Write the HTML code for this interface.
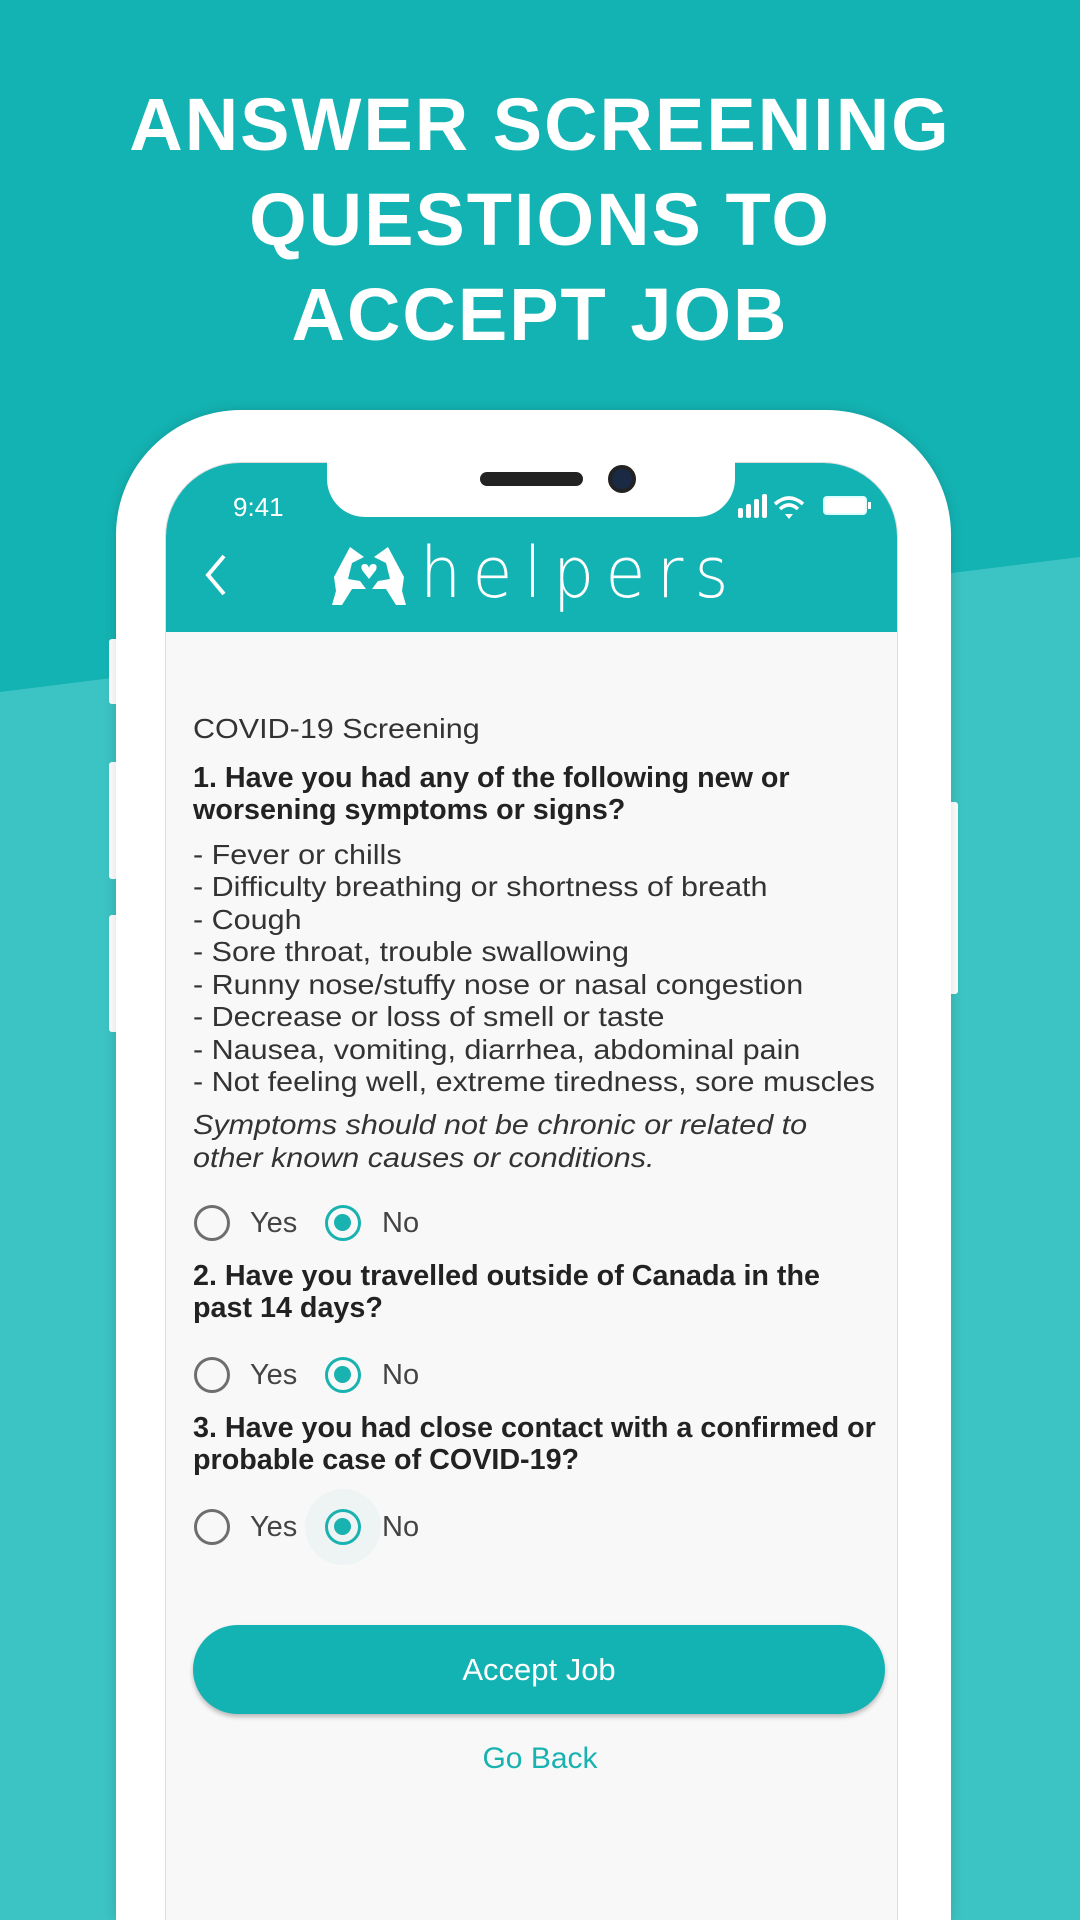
<!DOCTYPE html>
<html style="width:1080px;height:1920px;overflow:hidden"><head><meta charset="utf-8"><style>
*{margin:0;padding:0;box-sizing:border-box}
body{width:1080px;height:1920px;overflow:hidden;position:relative;background:#14b3b3;font-family:"Liberation Sans",sans-serif}
.abs{position:absolute}
.t{position:absolute;left:0;width:1080px;text-align:center;color:#fff;font-weight:bold;font-size:74px;letter-spacing:2px}
.ln{position:absolute;left:193px;white-space:nowrap;transform-origin:left center;transform:scaleX(1.09);color:#333;line-height:1}
.q{font-size:29px;color:#222;font-weight:bold;transform:scaleX(.99)}
.r{position:absolute;width:36px;height:36px;border-radius:50%;border:3.5px solid #6e6e6e}
.rs{border-color:#18b2b0}
.rs::after{content:"";position:absolute;left:6px;top:6px;width:17px;height:17px;border-radius:50%;background:#18b2b0}
.lab{position:absolute;font-size:29px;color:#444}
</style></head><body>
<svg class="abs" style="left:0;top:0" width="1080" height="1920"><polygon points="0,692 1080,557 1080,1920 0,1920" fill="#3cc3c3"/></svg>
<div class="t" style="top:82px">ANSWER SCREENING</div>
<div class="t" style="top:177px">QUESTIONS TO</div>
<div class="t" style="top:272px">ACCEPT JOB</div>

<div class="abs" style="left:109px;top:639px;width:10px;height:65px;background:#fff;border-radius:3px"></div>
<div class="abs" style="left:109px;top:762px;width:10px;height:117px;background:#fff;border-radius:3px"></div>
<div class="abs" style="left:109px;top:915px;width:10px;height:117px;background:#fff;border-radius:3px"></div>
<div class="abs" style="left:946px;top:802px;width:12px;height:192px;background:#fff;border-radius:3px"></div>
<div class="abs" style="left:116px;top:410px;width:835px;height:1510px;background:#fff;border-radius:125px 125px 0 0;box-shadow:0 0 12px rgba(0,0,0,.15)"></div>
<div class="abs" style="left:165px;top:462px;width:733px;height:1458px;background:#f8f8f8;border-radius:75px 75px 0 0;overflow:hidden;border:1px solid #ddd;border-bottom:none">
 <div class="abs" style="left:0;top:0;width:733px;height:169px;background:#14b3b3"></div>
</div>
<div class="abs" style="left:327px;top:455px;width:408px;height:62px;background:#fff;border-radius:0 0 38px 38px"></div>
<div class="abs" style="left:480px;top:472px;width:103px;height:14px;background:#222;border-radius:7px"></div>
<div class="abs" style="left:608px;top:465px;width:28px;height:28px;background:#1a2a44;border-radius:50%;border:4px solid #222"></div>
<div class="abs" style="left:233px;top:492px;color:#fff;font-size:26px">9:41</div>
<svg class="abs" style="left:738px;top:492px" width="136" height="28">
 <rect x="0" y="16" width="5" height="10" rx="2" fill="#fff"/><rect x="8" y="12" width="5" height="14" rx="2" fill="#fff"/><rect x="16" y="7" width="5" height="19" rx="2" fill="#fff"/><rect x="24" y="2" width="5" height="24" rx="2" fill="#fff"/>
 <path d="M37 12 Q51 0 65 12" stroke="#fff" stroke-width="3.5" fill="none"/><path d="M42 17 Q51 9 60 17" stroke="#fff" stroke-width="3.5" fill="none"/><path d="M47 22 L51 27 L55 22 Z" fill="#fff"/>
 <rect x="86" y="5" width="42" height="17" rx="3" fill="#fff" stroke="#dff" stroke-width="2"/><rect x="130" y="10" width="3" height="7" fill="#fff"/>
</svg>
<svg class="abs" style="left:200px;top:552px" width="30" height="46"><path d="M24 4 L8 23 L24 42" stroke="#fff" stroke-width="4" fill="none"/></svg>
<svg class="abs" style="left:330px;top:543px" width="80" height="66">
 <path d="M20 4 L4 34 L6 48 L2 62 L12 62 L22 46 L36 46 L30 38 L18 36 L22 20 L34 14 Z" fill="#fff"/>
 <path d="M58 4 L74 34 L72 48 L76 62 L66 62 L56 46 L42 46 L48 38 L60 36 L56 20 L44 14 Z" fill="#fff"/>
 <path d="M39 36 L32 27 Q30 21 35 21 Q38 21 39 25 Q40 21 43 21 Q48 21 46 27 Z" fill="#fff"/>
</svg>
<div class="abs" style="left:420px;top:532px;color:#fff;font-size:70px;font-weight:300;letter-spacing:12px;font-family:'DejaVu Sans','Liberation Sans',sans-serif;transform:scaleX(.93);transform-origin:left">helpers</div>

<div class="ln" style="top:715px;font-size:28px">COVID-19 Screening</div>
<div class="ln q" style="top:764px">1. Have you had any of the following new or</div>
<div class="ln q" style="top:796px">worsening symptoms or signs?</div>
<div class="ln" style="top:841px;font-size:28px">- Fever or chills</div>
<div class="ln" style="top:873px;font-size:28px">- Difficulty breathing or shortness of breath</div>
<div class="ln" style="top:906px;font-size:28px">- Cough</div>
<div class="ln" style="top:938px;font-size:28px">- Sore throat, trouble swallowing</div>
<div class="ln" style="top:971px;font-size:28px">- Runny nose/stuffy nose or nasal congestion</div>
<div class="ln" style="top:1003px;font-size:28px">- Decrease or loss of smell or taste</div>
<div class="ln" style="top:1036px;font-size:28px">- Nausea, vomiting, diarrhea, abdominal pain</div>
<div class="ln" style="top:1068px;font-size:28px">- Not feeling well, extreme tiredness, sore muscles</div>
<div class="ln" style="top:1111px;font-size:28px;font-style:italic">Symptoms should not be chronic or related to</div>
<div class="ln" style="top:1144px;font-size:28px;font-style:italic">other known causes or conditions.</div>

<div class="r" style="left:194px;top:1205px"></div><div class="lab" style="left:250px;top:1207px">Yes</div>
<div class="r rs" style="left:325px;top:1205px"></div><div class="lab" style="left:382px;top:1207px">No</div>
<div class="ln q" style="top:1262px">2. Have you travelled outside of Canada in the</div>
<div class="ln q" style="top:1294px">past 14 days?</div>
<div class="r" style="left:194px;top:1357px"></div><div class="lab" style="left:250px;top:1359px">Yes</div>
<div class="r rs" style="left:325px;top:1357px"></div><div class="lab" style="left:382px;top:1359px">No</div>
<div class="ln q" style="top:1414px">3. Have you had close contact with a confirmed or</div>
<div class="ln q" style="top:1446px">probable case of COVID-19?</div>
<div class="abs" style="left:305px;top:1489px;width:76px;height:76px;border-radius:50%;background:#eef4f3"></div>
<div class="r" style="left:194px;top:1509px"></div><div class="lab" style="left:250px;top:1511px">Yes</div>
<div class="r rs" style="left:325px;top:1509px"></div><div class="lab" style="left:382px;top:1511px">No</div>

<div class="abs" style="left:193px;top:1625px;width:692px;height:89px;border-radius:45px;background:#14b3b3;box-shadow:0 3px 5px rgba(0,0,0,.25);color:#fff;font-size:31px;text-align:center;line-height:89px">Accept Job</div>
<div class="abs" style="left:0;width:1080px;top:1742px;text-align:center;color:#18b2b0;font-size:30px">Go Back</div>
</body></html>
